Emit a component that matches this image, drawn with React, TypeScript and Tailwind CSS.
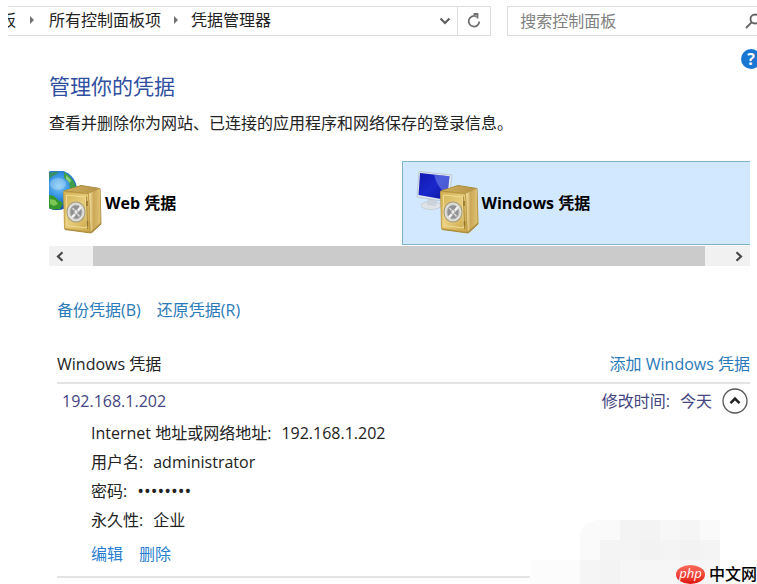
import React, { useState } from 'react';

const Safe = () => (
  <g strokeLinejoin="round">
    <path d="M26 20 L43 14.5 L62 17.5 L63 53 L55 60.5 L53 62 L27 58.5 Z" fill="#a98a3a" stroke="#a98a3a" />
    <path d="M27 19.5 L43 15 L62 17.5 L51 22.5 Z" fill="url(#safeTop)" />
    <path d="M51 22.5 L62 17.5 L62.5 52 L52.5 61 Z" fill="url(#safeSide)" />
    <path d="M25.500 20.500 L50.500 23 L52 61 L26.500 57.500 Z" fill="url(#safeFront)" stroke="#c09c46" strokeWidth=".8" />
    <path d="M28.500 24 L47.500 26 L48.500 57 L29 54.5 Z" fill="none" stroke="#f0dc98" strokeWidth="1" />
    <path d="M48.500 25.500 L49.500 58" fill="none" stroke="#9c7a2c" strokeWidth=".8" />
    <path d="M49 30 v5 M49.500 50 v5" stroke="#94752c" strokeWidth="1.600" />
    <ellipse cx="38" cy="41" rx="9.500" ry="10.500" fill="#a39a7c" />
    <ellipse cx="38" cy="41" rx="8.500" ry="9.500" fill="#dededa" />
    <ellipse cx="38" cy="41" rx="6" ry="7" fill="#8e9094" stroke="#b5b5b0" strokeWidth="1" />
    <path d="M34 46.500 L43 36" stroke="#f2f2ee" strokeWidth="2.600" />
    <path d="M34.500 37 L41.500 45.500" stroke="#d8d8d4" strokeWidth="1.600" />
    <ellipse cx="38" cy="41" rx="2" ry="2.400" fill="#e8e8e4" stroke="#888" strokeWidth=".6" />
  </g>
);

const Gradients = () => (
  <svg width="0" height="0" className="absolute" aria-hidden="true">
    <defs>
      <linearGradient id="safeFront" x1="0" y1="0" x2="1" y2="1">
        <stop offset="0" stopColor="#d3b253" />
        <stop offset=".5" stopColor="#e6cc7a" />
        <stop offset="1" stopColor="#cba545" />
      </linearGradient>
      <linearGradient id="safeTop" x1="0" y1="0" x2="1" y2="0">
        <stop offset="0" stopColor="#d0b05a" />
        <stop offset="1" stopColor="#b4924a" />
      </linearGradient>
      <linearGradient id="safeSide" x1="0" y1="0" x2="1" y2="0">
        <stop offset="0" stopColor="#f6e4a4" />
        <stop offset=".4" stopColor="#cba858" />
        <stop offset="1" stopColor="#dfc272" />
      </linearGradient>
      <radialGradient id="globe" cx=".55" cy=".4" r=".6">
        <stop offset="0" stopColor="#7cc8f6" />
        <stop offset=".5" stopColor="#2f8ee0" />
        <stop offset="1" stopColor="#164c9e" />
      </radialGradient>
      <linearGradient id="screen" x1="0" y1="0" x2="1" y2="1">
        <stop offset="0" stopColor="#1018b0" />
        <stop offset=".5" stopColor="#1a28cc" />
        <stop offset="1" stopColor="#0a1090" />
      </linearGradient>
    </defs>
  </svg>
);

const WebIcon = () => (
  <svg width="64" height="64" viewBox="0 0 64 64" className="shrink-0" aria-hidden="true">
    <circle cx="19" cy="19" r="20" fill="url(#globe)" />
    <path d="M11 2 Q16 0 20 .5 L19 3 L15 5 L11 8 Z" fill="#3a8f6a" />
    <path d="M26 1 Q35 6 38 16 L35 20 L32 17 L31 11 L26 7 Z" fill="#3f9e4a" />
    <path d="M28 4 L33 9 L32 12 L28 8 Z" fill="#8ed07a" />
    <path d="M11 24 L16 25 L20 29 L25 32 L22 38 L15 38.500 L11 37 Z" fill="#35982c" />
    <path d="M12 28 L17 29 L20 33 L16 35 L12 33 Z" fill="#7cc653" />
    <ellipse cx="20" cy="13" rx="8" ry="6" fill="#fff" opacity=".25" />
    <Safe />
  </svg>
);

const MonitorIcon = () => (
  <svg width="64" height="64" viewBox="0 0 64 64" className="shrink-0" aria-hidden="true">
    <ellipse cx="16" cy="34.500" rx="10" ry="4" fill="#dfe3e8" stroke="#c0c8d2" strokeWidth=".8" />
    <path d="M13 26 L22 28 L21 35 L12 34 Z" fill="#cbd2dc" />
    <path d="M4 .5 L37 4 L34 31 L2 26 Z" fill="#e4eaf2" stroke="#b4c0d0" strokeWidth=".8" />
    <path d="M5 2 L34.500 5.200 L31.800 29 L3.500 24 Z" fill="url(#screen)" />
    <path d="M19 3.500 L34.500 5.200 L32.500 24 Q22 17 19 3.500 Z" fill="#7f96f0" opacity=".5" />
    <Safe />
  </svg>
);

const Crumb = () => (
  <svg width="6" height="8" viewBox="0 0 6 8" aria-hidden="true">
    <path d="M1 0 L5 4 L1 8 Z" fill="#707070" />
  </svg>
);

// [x, y, width, fill] on a 20px grid
const mosaic: [number, number, number, string][] = [
  [70, 8, 20, '#fafafa'],
  [90, 8, 40, '#f3f3f3'],
  [130, 8, 20, '#f7f7f7'],
  [150, 8, 20, '#f5f5f5'],
  [170, 8, 20, '#fafafa'],
  [50, 28, 20, '#fafafa'],
  [70, 28, 120, '#f4f4f4'],
  [110, 28, 20, '#f2f2f2'],
  [150, 28, 20, '#f2f2f2'],
  [0, 48, 50, '#fcfcfc'],
  [50, 48, 20, '#f5f5f5'],
  [70, 48, 20, '#f3f3f3'],
  [90, 48, 100, '#f6f6f6'],
  [190, 48, 37, '#fcfcfc'],
];

const details = [
  { label: 'Internet 地址或网络地址:', value: '192.168.1.202' },
  { label: '用户名:', value: 'administrator' },
  { label: '密码:', value: '••••••••', secret: true },
  { label: '永久性:', value: '企业' },
];

const App = () => {
  const [selected, setSelected] = useState('windows');
  const [open, setOpen] = useState(true);

  return (
    <div className="relative min-h-screen overflow-hidden bg-white pt-[6px] font-['Open_Sans','Noto_Sans_CJK_SC',sans-serif] text-base leading-6 text-[#222]">
      <Gradients />

      {/* Address bar and search */}
      <header className="flex h-[30px] gap-4 pl-2">
        <div className="flex min-w-0 flex-1 border-y border-r border-[#dcdcdc]">
          <nav className="flex flex-1 items-center whitespace-nowrap pb-[2px]">
            <a href="#" className="flex w-2 justify-end overflow-hidden">板</a>
            <span className="ml-[13px]"><Crumb /></span>
            <a href="#" className="ml-[14px]">所有控制面板项</a>
            <span className="ml-3"><Crumb /></span>
            <a href="#" className="ml-3">凭据管理器</a>
          </nav>
          <button aria-label="历史记录" className="flex w-6 items-center justify-center">
            <svg width="12" height="8" viewBox="0 0 12 8" fill="none" stroke="#606060" strokeWidth="2.200">
              <path d="M1.500 1.500 L6 6 L10.500 1.500" />
            </svg>
          </button>
          <button aria-label="刷新" className="flex w-[33px] items-center justify-center border-l border-[#dcdcdc]">
            <svg width="14" height="16" viewBox="0 0 14 16" fill="none" stroke="#707070" strokeWidth="1.800">
              <path d="M9.500 3.600 A5.300 5.300 0 1 0 12.300 8.500" />
              <path d="M6.500 1 H10.500 V5.500" />
            </svg>
          </button>
        </div>
        <div className="flex w-1/3 items-center overflow-hidden border-y border-l border-[#dcdcdc] pl-3">
          <input
            type="text"
            aria-label="搜索控制面板"
            placeholder="搜索控制面板"
            className="min-w-0 flex-1 bg-transparent outline-none placeholder:text-[#808080]"
          />
          <svg width="16" height="16" viewBox="0 0 16 16" fill="none" stroke="#606060" strokeWidth="1.800" className="-mr-1 shrink-0" aria-hidden="true">
            <circle cx="10" cy="6" r="4.500" />
            <path d="M6.800 9.200 L1 15" />
          </svg>
        </div>
      </header>

      <div className="flex h-[35px] items-end justify-end">
        <button aria-label="帮助" className="-mr-1 mb-[2px] flex h-5 w-5 items-center justify-center rounded-full bg-[#1976d2] text-base font-bold leading-5 text-white">?</button>
      </div>

      <main className="pl-[49px] pr-[7px]">
        <h1 className="text-[21px] leading-[30px] text-[#2f4fa0]">管理你的凭据</h1>
        <p className="mt-[10px] whitespace-nowrap">查看并删除你为网站、已连接的应用程序和网络保存的登录信息。</p>

        {/* Credential type picker, scrolled sideways */}
        <div className="mt-[26px] overflow-hidden">
          <div className="-ml-6 -mr-7 grid grid-cols-2 font-bold text-black">
            <button
              onClick={() => setSelected('web')}
              className={`flex h-[84px] items-center gap-[3px] border pl-3 ${selected === 'web' ? 'border-[#7fb4cc] bg-[#d1e8ff]' : 'border-transparent'}`}
            >
              <WebIcon />
              <span>Web 凭据</span>
            </button>
            <button
              onClick={() => setSelected('windows')}
              className={`flex h-[84px] items-center gap-[3px] border pl-3 ${selected === 'windows' ? 'border-[#7fb4cc] bg-[#d1e8ff]' : 'border-transparent'}`}
            >
              <MonitorIcon />
              <span>Windows 凭据</span>
            </button>
          </div>
        </div>
        <div className="mt-px flex h-5 bg-[#f1f1f1]">
          <button aria-label="向左滚动" className="flex w-11 items-center pl-[6px]">
            <svg width="9" height="11" viewBox="0 0 9 11" fill="none" stroke="#484848" strokeWidth="2.200">
              <path d="M7.500 1.200 L3 5.500 L7.500 9.800" />
            </svg>
          </button>
          <div className="flex-1 bg-[#cbcbcb]" />
          <button aria-label="向右滚动" className="flex w-[45px] items-center justify-end pr-[6px]">
            <svg width="9" height="11" viewBox="0 0 9 11" fill="none" stroke="#484848" strokeWidth="2.200">
              <path d="M1.500 1.200 L6 5.500 L1.500 9.800" />
            </svg>
          </button>
        </div>

        <div className="pl-2">
          <div className="mt-8 flex gap-4 text-[#2a7ab9]">
            <a href="#">备份凭据(B)</a>
            <a href="#">还原凭据(R)</a>
          </div>

          <div className="mt-[30px] flex justify-between border-b-2 border-[#e2e4e6] pb-[6px]">
            <h2>Windows 凭据</h2>
            <a href="#" className="text-[#2a7ab9]">添加 Windows 凭据</a>
          </div>

          {/* Stored credential */}
          <section className="border-b-2 border-[#e2e4e6] pb-[10px]">
            <div className="flex h-[34px] items-center pl-[5px] pr-[2px] text-[#45457f]">
              <span className="flex-1">192.168.1.202</span>
              <span className="flex gap-[10px]">
                <span>修改时间:</span>
                <span>今天</span>
              </span>
              <button aria-label="展开或折叠" onClick={() => setOpen(!open)} className="ml-[10px]">
                <svg width="26" height="26" viewBox="0 0 26 26" fill="none">
                  <circle cx="13" cy="13" r="12" stroke="#555" strokeWidth="1.300" />
                  <path d={open ? 'M8.500 15.200 L13 10.700 L17.500 15.200' : 'M8.500 10.800 L13 15.300 L17.500 10.800'} stroke="#222" strokeWidth="2.600" />
                </svg>
              </button>
            </div>
            {open && (
              <div className="pl-[34px]">
                <dl>
                  {details.map((d) => (
                    <div key={d.label} className="flex h-[29px] items-center gap-[10px]">
                      <dt>{d.label}</dt>
                      <dd className={d.secret ? 'text-lg leading-6' : ''}>{d.value}</dd>
                    </div>
                  ))}
                </dl>
                <div className="mt-2 flex gap-4 text-[#2a7fd0]">
                  <a href="#">编辑</a>
                  <a href="#">删除</a>
                </div>
              </div>
            )}
          </section>
        </div>
      </main>

      {/* Watermark over the lower right corner */}
      <div className="absolute bottom-0 right-0">
        <svg width="227" height="72" viewBox="0 0 227 72" className="block" aria-hidden="true">
          <path d="M50 28 V22 Q52 10 68 8 H90 V28 Z" fill="#fafafa" />
          {mosaic.map(([x, y, w, fill], i) => (
            <rect key={i} x={x} y={y} width={w} height={y === 48 ? 24 : 20} fill={fill} />
          ))}
        </svg>
        <div className="absolute bottom-0 right-0 flex items-center gap-1">
          <span className="flex h-[19px] w-[29px] items-center justify-center rounded-[50%] bg-linear-to-b from-[#ff6a5c] to-[#e00808] pb-[2px] text-[13px] italic leading-4 text-white">php</span>
          <span className="text-base leading-5 font-medium text-black">中文网</span>
        </div>
      </div>
    </div>
  );
};

export default App;
